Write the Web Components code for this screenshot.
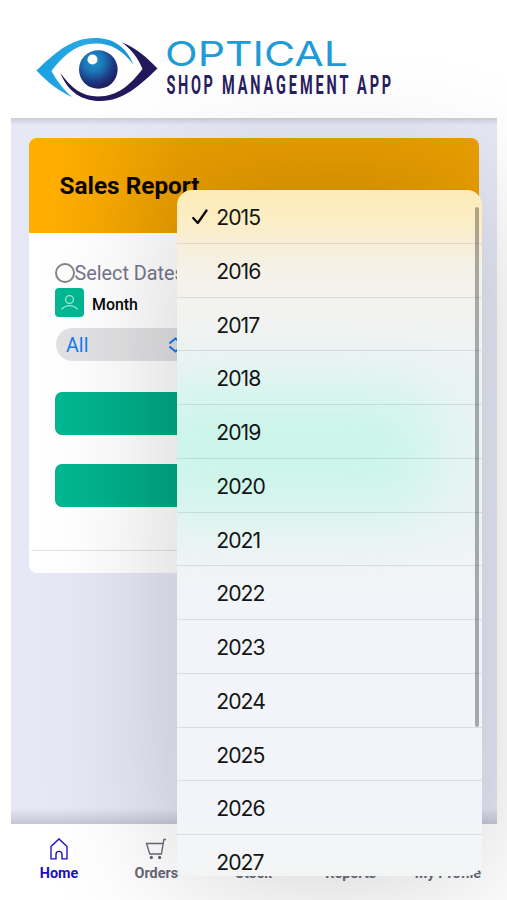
<!DOCTYPE html>
<html lang="en">
<head>
<meta charset="utf-8">
<title>Optical Shop Management App</title>
<style>
html,body{margin:0;height:900px;overflow:hidden;background:#fff}
body{font-family:Roboto,"Liberation Sans",sans-serif}
</style>
</head>
<body>
<optical-app></optical-app>
<script>
const define = (name, html, setup) => customElements.define(name, class extends HTMLElement {
  constructor() {
    super();
    const t = document.createElement('template');
    t.innerHTML = html;
    this.attachShadow({mode: 'open'}).append(t.content.cloneNode(true));
  }
  connectedCallback() { if (setup) setup(this, this.shadowRoot); }
});

define('brand-header', `
<style>
:host{display:block;height:118px}
svg{display:block}
</style>
<svg width="507" height="118" viewBox="0 0 507 118">
  <defs>
    <radialGradient id="ball" cx=".38" cy=".3" r=".72"><stop offset="0" stop-color="#2390cd"/><stop offset=".35" stop-color="#1b78b8"/><stop offset=".75" stop-color="#1d357d"/><stop offset="1" stop-color="#21195b"/></radialGradient>
    <linearGradient id="sky" x1="0" x2="1"><stop offset="0" stop-color="#1b9fe0"/><stop offset=".5" stop-color="#29aae4"/><stop offset="1" stop-color="#1590d0"/></linearGradient>
  </defs>
  <path fill="url(#sky)" d="M72 97C59 91 48 83 36.500 70.500C54 54 70 38 95 38C114 38 126 47 133.500 64.500C123 51 112 43.500 96 43.500C76 43.500 63 56 51.500 71C57 81 63 89 72 97Z"/>
  <path fill="#21195b" d="M122 42.500C137 48 147 58 157.500 68.500C140 85 124 101 100 101C82 101 68 92 60.500 73C71 88 82 96.500 98 96.500C118 96.500 131 84 142.500 69C138 58 132 50 122 42.500Z"/>
  <circle cx="98.300" cy="69.500" r="19.300" fill="url(#ball)"/>
  <circle cx="92.500" cy="59.500" r="5" fill="#fff"/>
  <text x="165" y="65.500" textLength="183" lengthAdjust="spacingAndGlyphs" font-family="Inter" font-size="34.500" font-weight="400" fill="#1d9cd8">OPTICAL</text>
  <g font-family="Liberation Sans Narrow, Roboto, sans-serif" font-weight="700" font-size="25" fill="#28205f">
    <g transform="translate(166.500 93.500) scale(.58 1)"><text textLength="80">SHOP</text></g>
    <g transform="translate(222 93.500) scale(.58 1)"><text textLength="218">MANAGEMENT</text></g>
    <g transform="translate(357 93.500) scale(.58 1)"><text textLength="59">APP</text></g>
  </g>
</svg>`);

define('report-card', `
<style>
:host{display:flex;flex-direction:column;width:450px;height:435px;border-radius:8px;overflow:hidden;background:#fff}
header{height:95px;padding-left:30.500px;background:linear-gradient(90deg,rgba(120,75,0,0) 20px,rgba(120,75,0,.16) 150px,rgba(120,75,0,.14)),#ffae00;display:flex;align-items:center;font:700 24.350px Roboto,sans-serif;color:#090600;box-sizing:border-box}
main{height:317px;box-sizing:border-box;padding:26px 26px 0}
footer{border-top:1px solid #e3e3e3;margin-left:2px;flex:1}
</style>
<header><slot name="title"></slot></header>
<main><slot></slot></main>
<footer></footer>`);

define('radio-option', `
<style>
:host{display:flex;align-items:center;height:27px;font-size:19.800px;color:#77758c;white-space:nowrap}
i{box-sizing:border-box;width:20px;height:20px;border:2px solid #858588;border-radius:50%;margin-right:-.500px}
span{padding-top:1.500px}
</style><i></i><span><slot></slot></span>`);

define('field-label', `
<style>
:host{display:flex;align-items:center;gap:8px;margin-top:2px;height:29px;font-size:15.900px;font-weight:500;color:#080808}
svg{display:block;background:#00b892;border-radius:4px}
span{padding-top:3px}
</style>
<svg width="29" height="29" viewBox="0 0 29 29" fill="none" stroke="#9fe6d4" stroke-width="1.300" stroke-linecap="round"><circle cx="14.500" cy="11.500" r="3.900"/><path d="M6.800 21c4.300-4.600 11.100-4.600 15.400 0"/></svg>
<span><slot></slot></span>`);

define('select-pill', `
<style>
:host{display:flex;align-items:center;justify-content:space-between;box-sizing:border-box;width:136px;height:33px;margin:11px 0 0 1px;padding:0 10px;border-radius:17px;background:#e2e2e4;color:#137cf2;font-size:19.700px}
span{padding-top:1.500px}
</style>
<span><slot></slot></span>
<svg width="13" height="16" viewBox="0 0 13 16" fill="none" stroke="#137cf2" stroke-width="2"><path d="M.500 6.500L6.500 1.500 12.500 6.500M.500 9.500L6.500 14.500 12.500 9.500"/></svg>`);

define('action-bar', `
<style>:host{display:block;height:42.500px;border-radius:7px;background:linear-gradient(90deg,rgba(0,60,40,0),rgba(0,60,40,.12) 122px),#00b892;margin-top:29.500px}</style>`);

define('nav-item', `
<style>
:host{display:flex;flex:1;flex-direction:column;align-items:center;padding-top:13px;gap:4px;color:#686878;font-size:14.400px;font-weight:700;line-height:17px;white-space:nowrap}
:host([active]){color:#1d10c4}
svg{width:24px;height:24px;fill:none;stroke:currentColor;stroke-width:1.350}
</style>
<svg viewBox="0 0 24 24"></svg><span><slot></slot></span>`,
(host, root) => {
  const icons = {
    home: '<path d="M4 9.500L12 2l8 7.500v12.300h-5v-4.500c0-2-1-3-3-3s-3 1-3 3v4.500H4z"/>',
    cart: '<path d="M2.500 6.500h16.700L17.400 17H5.800zM19.200 6.500l.7-4h2"/><circle cx="7.300" cy="20.500" r="1" fill="currentColor"/><circle cx="15.600" cy="20.500" r="1" fill="currentColor"/>',
    box: '<path d="M3 7l9-5 9 5v10l-9 5-9-5zM3 7l9 5 9-5M12 12v10"/>',
    chart: '<path d="M3 21V3M3 21h18M8 18v-6M13 18V7M18 18v-9"/>',
    user: '<circle cx="12" cy="8" r="5"/><path d="M3 22c3-7 15-7 18 0"/>'
  };
  root.querySelector('svg').innerHTML = icons[host.getAttribute('icon')];
});

define('menu-row', `
<style>
:host{display:flex;align-items:center;box-sizing:border-box;height:53.750px;flex:none;padding:1.500px 0 0 14px;border-bottom:1px solid rgba(60,70,70,.13);font:400 21.200px/16px Inter,sans-serif;letter-spacing:-.950px;color:#141615}
svg{width:18px;height:18px;margin-right:7.200px;visibility:hidden}
:host([checked]) svg{visibility:visible}
</style>
<svg viewBox="0 0 18 18" fill="none" stroke="#0c0b08" stroke-width="2.300" stroke-linecap="round" stroke-linejoin="round"><path d="M2.200 10L6.800 15 15.500 2.500"/></svg>
<span><slot></slot></span>`);

define('year-menu', `
<style>
:host{position:absolute;left:177px;top:190px;width:305px;height:686px;border-radius:15px;overflow:hidden;
 display:flex;flex-direction:column;
 background:linear-gradient(#fdebb8 0,#fcedc3 28px,#f8eed6 52px,#f4f1e8 80px,#f2f3f1 125px,#eef3f4 170px,#eaf4f4 210px,#eaf4f3 320px,#f0f4f6 370px,#f2f4f9 430px,#f2f4f9 625px,#f4f5f6 670px,#f3f4f4 686px)}
.glow{position:absolute;left:-45px;top:198px;width:305px;height:125px;border-radius:40px;background:#cbf5ea;filter:blur(30px)}
b{position:absolute;right:3px;top:17px;width:4px;height:520px;border-radius:2px;background:rgba(0,0,0,.31)}
slot{display:block;position:relative}
</style><div class="glow"></div><slot></slot><b></b>`);

define('optical-app', `
<style>
:host{display:block;position:relative;width:507px;height:900px;overflow:hidden;background:#fff}
.stage{width:486px;height:706px;margin-left:11px;box-sizing:border-box;padding:20px 18px;background:linear-gradient(rgba(65,65,75,.17),rgba(65,65,75,0) 7px,rgba(65,65,75,0) 690px,rgba(65,65,75,.2)) ,#e6e8f6}
nav{display:flex;width:486px;margin-left:10.500px;height:76px}
.shade{position:absolute;inset:0;overflow:hidden;pointer-events:none}
.shade i{position:absolute;left:177px;top:190px;width:305px;height:686px;border-radius:15px;box-shadow:0 0 140px rgba(0,0,0,.2)}
</style>
<brand-header></brand-header>
<div class="stage">
  <report-card>
    <span slot="title">Sales Report</span>
    <radio-option>Select Dates</radio-option>
    <field-label>Month</field-label>
    <select-pill>All</select-pill>
    <action-bar style="margin-top:31px"></action-bar>
    <action-bar></action-bar>
  </report-card>
</div>
<nav>
  <nav-item icon="home" active>Home</nav-item>
  <nav-item icon="cart">Orders</nav-item>
  <nav-item icon="box">Stock</nav-item>
  <nav-item icon="chart">Reports</nav-item>
  <nav-item icon="user">My Profile</nav-item>
</nav>
<div class="shade"><i></i></div>
<year-menu></year-menu>`,
(host, root) => {
  const menu = root.querySelector('year-menu');
  for (let y = 2015; y <= 2027; y++) {
    const row = document.createElement('menu-row');
    row.textContent = y;
    if (y === 2015) row.setAttribute('checked', '');
    menu.append(row);
  }
});
</script>
</body>
</html>
